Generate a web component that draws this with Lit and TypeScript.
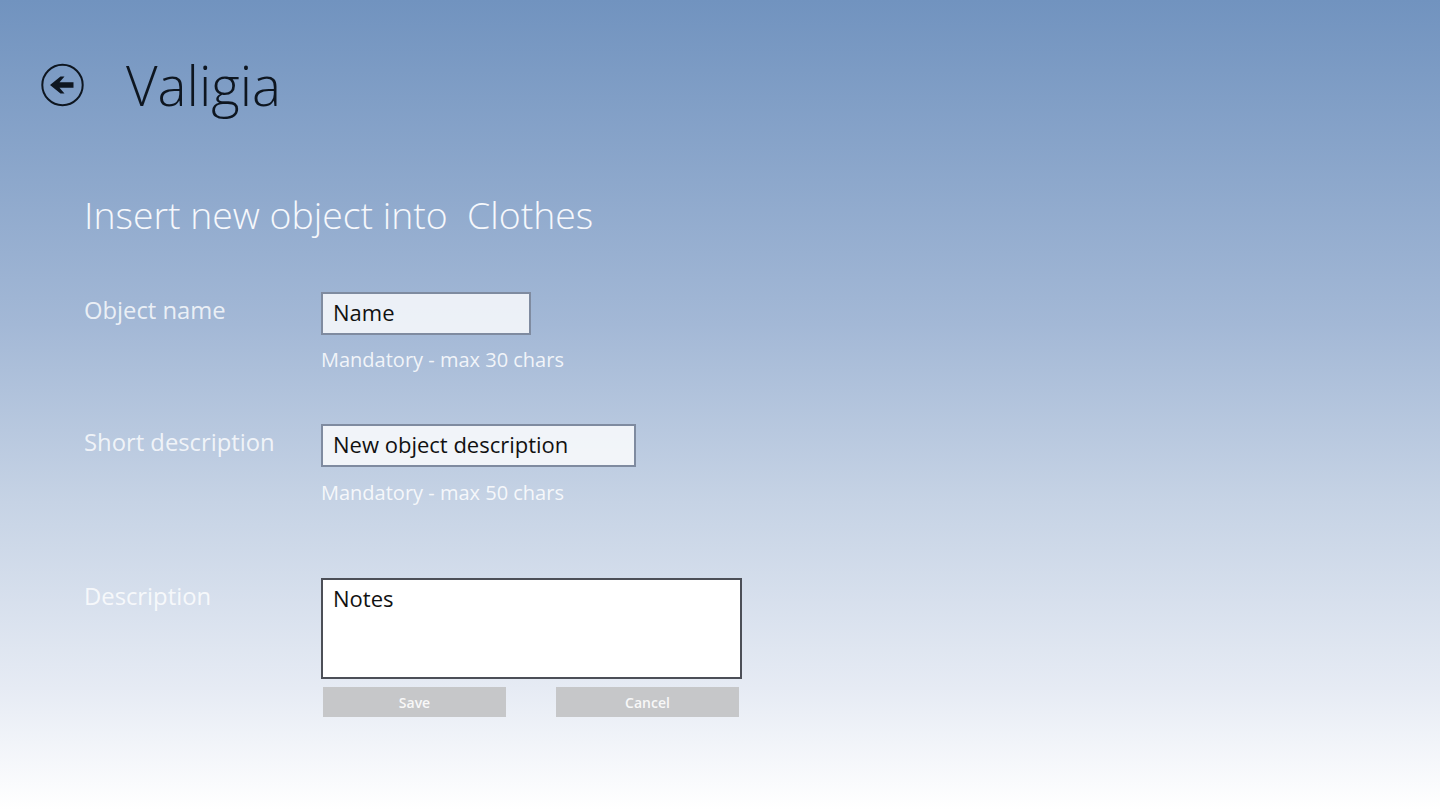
import { LitElement, html, css } from "lit";
import { customElement } from "lit/decorators.js";

@customElement("app-root")
export class AppRoot extends LitElement {
  static styles = css`
    :host {
      display: block;
      width: 1440px;
      height: 810px;
      overflow: hidden;
      font-family: "Open Sans", "Noto Sans", sans-serif;
      background: linear-gradient(180deg, #7193bf 0%, #a3b8d6 40%, #c6d3e5 62%, #e6ebf4 85%, #ffffff 100%);
    }
    .header {
      display: flex;
      align-items: center;
      height: 170px;
      padding-left: 40px;
      box-sizing: border-box;
    }
    .back {
      width: 44px;
      height: 44px;
      padding: 0;
      border: 0;
      background: none;
      display: block;
      margin-right: 42px;
    }
    .title {
      margin: 0;
      font-size: 54.7px;
      font-weight: 300;
      color: #0e1620;
      line-height: 70px;
    }
    .form {
      padding-left: 85px;
      padding-top: 22px;
    }
    .heading {
      margin: 0 0 54px -1px;
      font-size: 37.4px;
      font-weight: 300;
      line-height: 46px;
      color: #f6f8fc;
      white-space: pre;
    }
    .row {
      display: grid;
      grid-template-columns: 236px 1fr;
    }
    .label {
      margin-left: -1px;
      font-size: 23.8px;
      line-height: 36px;
      color: rgba(255, 255, 255, 0.8);
    }
    .field {
      box-sizing: border-box;
      display: block;
      height: 43px;
      border: 2px solid #7f8ba0;
      padding: 0 10px 4px;
      font: inherit;
      font-size: 22px;
      color: #111;
      background: rgba(255, 255, 255, 0.8);
      border-radius: 0;
      outline: none;
    }
    .name { width: 210px; }
    .short { width: 315px; }
    .hint {
      font-size: 20px;
      line-height: 24px;
      margin-top: 13px;
      color: rgba(255, 255, 255, 0.85);
    }
    .r2 .hint { margin-top: 14px; }
    .r1 { height: 132px; }
    .r2 { height: 154px; }
    .notes {
      box-sizing: border-box;
      display: block;
      width: 421px;
      height: 101px;
      border: 2px solid #4c4f57;
      padding: 1px 10px;
      font: inherit;
      font-size: 22px;
      line-height: 34px;
      color: #111;
      background: #fff;
      resize: none;
      outline: none;
      border-radius: 0;
    }
    .actions {
      display: flex;
      gap: 50px;
      margin: 8px 0 0 2px;
    }
    .btn {
      width: 183px;
      height: 30px;
      padding: 0;
      border: 0;
      background: #c6c7c9;
      color: #f8f8f8;
      font: inherit;
      font-size: 14px;
      font-weight: 600;
    }
  `;

  render() {
    return html`
      <div class="header">
        <button class="back" aria-label="Back">
          <svg width="44" height="44" viewBox="0 0 44 44" fill="none">
            <circle cx="22.5" cy="22" r="20.2" stroke="#0e1620" stroke-width="2"></circle>
            <path d="M33.5 19.2H19.5L24.5 13.5H20.5L10 22l10.5 8.5H24.5l-5-5.7H33.5z" fill="#0e1620"></path>
          </svg>
        </button>
        <h1 class="title">Valigia</h1>
      </div>
      <div class="form">
        <h2 class="heading">Insert new object into  Clothes</h2>
        <div class="row r1">
          <div class="label">Object name</div>
          <div>
            <input class="field name" .value=${"Name"} />
            <div class="hint">Mandatory - max 30 chars</div>
          </div>
        </div>
        <div class="row r2">
          <div class="label">Short description</div>
          <div>
            <input class="field short" .value=${"New object description"} />
            <div class="hint">Mandatory - max 50 chars</div>
          </div>
        </div>
        <div class="row">
          <div class="label">Description</div>
          <div>
            <textarea class="notes" .value=${"Notes"}></textarea>
            <div class="actions">
              <button class="btn">Save</button>
              <button class="btn">Cancel</button>
            </div>
          </div>
        </div>
      </div>
    `;
  }
}
